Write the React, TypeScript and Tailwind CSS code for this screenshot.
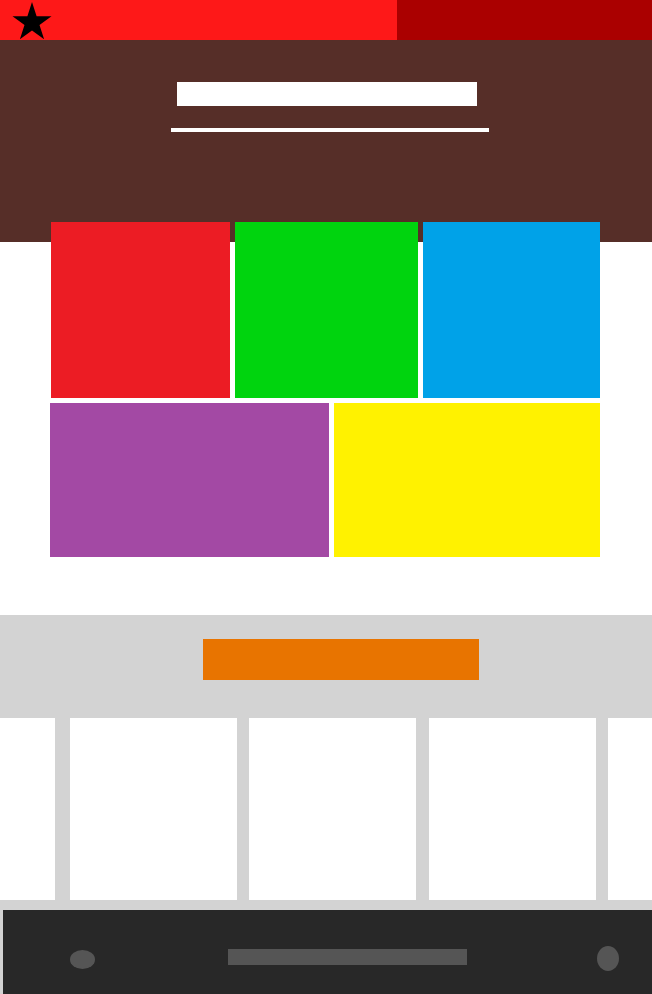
export default function App() {
  const columns = [
    { w: 'w-[55px]', gap: 'w-[15px]' },
    { w: 'w-[167px]', gap: 'w-[12px]' },
    { w: 'w-[167px]', gap: 'w-[13px]' },
    { w: 'w-[167px]', gap: 'w-[12px]' },
    { w: 'flex-1', gap: '' }
  ];

  return (
    <div className="w-[652px] h-[994px] bg-white overflow-hidden">
      {/* Top bar */}
      <div className="flex h-[40px]">
        <div className="w-[397px] bg-[#fe1818] pl-[12px] pt-[2px]">
          <svg width="40" height="38" viewBox="0 0 40 38">
            <polygon
              fill="#000"
              points="20,0 24.6,14.2 39.5,14.2 27.5,23 32.1,37.2 20,28.4 7.9,37.2 12.5,23 0.5,14.2 15.4,14.2"
            />
          </svg>
        </div>
        <div className="flex-1 bg-[#aa0000]" />
      </div>

      {/* Header */}
      <div className="h-[202px] bg-[#562e28] flex flex-col items-center pt-[42px]">
        <div className="w-[300px] h-[24px] bg-white ml-[2px]" />
        <div className="w-[318px] h-[4px] bg-white mt-[22px] ml-[8px]" />
      </div>

      {/* Tiles */}
      <div className="relative -mt-[20px] ml-[50px] w-[550px] flex flex-col gap-[5px]">
        <div className="flex gap-[5px] pl-[1px]">
          <div className="w-[179px] h-[176px] bg-[#ec1c24]" />
          <div className="w-[183px] h-[176px] bg-[#00d40e]" />
          <div className="w-[177px] h-[176px] bg-[#00a2e8]" />
        </div>
        <div className="flex gap-[5px]">
          <div className="w-[279px] h-[154px] bg-[#a349a4]" />
          <div className="w-[266px] h-[154px] bg-[#fff200]" />
        </div>
      </div>

      {/* Gray banner */}
      <div className="mt-[58px] h-[103px] bg-[#d3d3d3] pt-[24px] pl-[203px]">
        <div className="w-[276px] h-[41px] bg-[#e87400]" />
      </div>

      {/* Columns */}
      <div className="flex h-[182px] bg-[#d3d3d3]">
        {columns.map((c, i) => (
          <div key={i} className={`flex ${c.w === 'flex-1' ? 'flex-1' : ''}`}>
            <div className={`${c.w} h-full bg-white`} />
            {c.gap && <div className={`${c.gap} h-full`} />}
          </div>
        ))}
      </div>

      {/* Footer */}
      <div className="bg-[#d3d3d3] pt-[10px] pl-[3px]">
        <div className="h-[84px] bg-[#282828] flex items-center pt-[14px]">
          <div className="ml-[67px] w-[25px] h-[19px] rounded-[50%] bg-[#555555]" />
          <div className="ml-[133px] w-[239px] h-[16px] bg-[#555555] -mt-[4px]" />
          <div className="ml-[130px] w-[22px] h-[25px] rounded-[50%] bg-[#555555] -mt-[2px]" />
        </div>
      </div>
    </div>
  );
}
